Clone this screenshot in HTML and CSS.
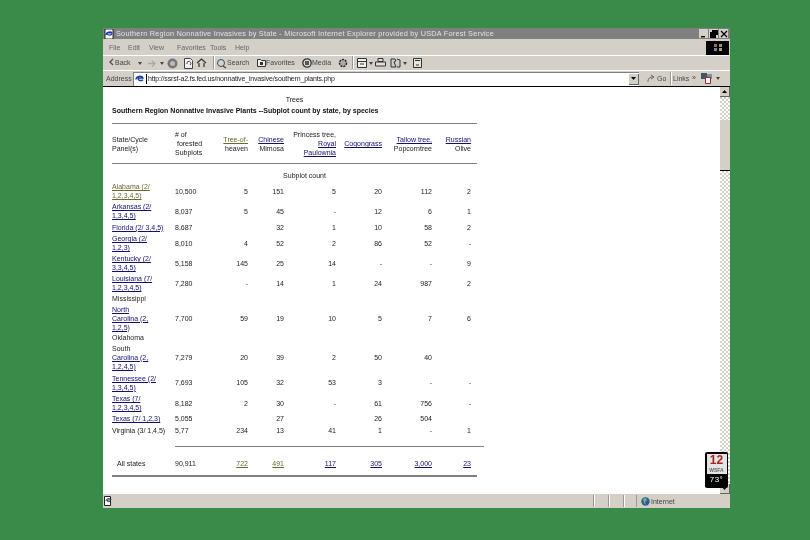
FILE: index.html
```html
<!DOCTYPE html>
<html lang="en">
<head>
<meta charset="utf-8">
<title>Southern Region Nonnative Invasives by State</title>
<link rel="stylesheet" href="styles.css">
</head>
<body>
<div class="window">
  <div class="titlebar">
    <svg class="ti" width="10" height="10" viewBox="0 0 10 10"><rect x="1" y="0" width="8" height="10" fill="#fff" stroke="#000" stroke-width=".8"/><path d="M2 6c0-3 5-4 6-2H3c0 2 3 3 5 1" fill="none" stroke="#1a3fa0" stroke-width="1.2"/></svg>
    <span class="title">Southern Region Nonnative Invasives by State - Microsoft Internet Explorer provided by USDA Forest Service</span>
    <div class="wbtns">
      <span class="wb"><svg width="8" height="8" viewBox="0 0 8 8"><rect x="1" y="6" width="4" height="1.4"/></svg></span>
      <span class="wb"><svg width="8" height="8" viewBox="0 0 8 8"><path d="M2 0h6v5H6v3H0V2h2z"/></svg></span>
      <span class="wb"><svg width="8" height="8" viewBox="0 0 8 8"><path d="M1 1l6 6M7 1L1 7" stroke="#000" stroke-width="1.3"/></svg></span>
    </div>
  </div>
  <div class="menubar">
    <span class="mi m1">File</span><span class="mi m2">Edit</span><span class="mi m3">View</span><span class="mi m4">Favorites</span><span class="mi m5">Tools</span><span class="mi m6">Help</span>
    <div class="flag"><svg width="10" height="9" viewBox="0 0 10 9"><path d="M1 1h3v3H1z" fill="#a86a5a"/><path d="M6 1h3v3H6z" fill="#8a9a70"/><path d="M1 5h3v3H1z" fill="#7a8a9a"/><path d="M6 5h3v3H6z" fill="#b0a070"/></svg></div>
  </div>
  <div class="toolbar">
    <svg class="tb-ic back" width="6" height="8" viewBox="0 0 6 8"><path d="M4 1L1 4l3 3" fill="none" stroke="#555" stroke-width="1.4"/></svg>
    <span class="tl back-l">Back</span>
    <span class="drop d1"></span>
    <svg class="tb-ic fwd" width="9" height="7" viewBox="0 0 9 7"><path d="M0 3.500h6M4 .5l3 3-3 3" fill="none" stroke="#a8a8a8" stroke-width="1.300"/></svg>
    <span class="drop d2"></span>
    <svg class="tb-ic stop" width="11" height="11" viewBox="0 0 11 11"><circle cx="5.500" cy="5.500" r="5" fill="#777"/><circle cx="5.500" cy="5.500" r="2.500" fill="#bbb"/></svg>
    <svg class="tb-ic refresh" width="9" height="11" viewBox="0 0 9 11"><path d="M.5.500h6l2 2v8H.5z" fill="#f2f2f2" stroke="#444"/><path d="M3 6a2 2 0 1 1 3 1" fill="none" stroke="#444"/></svg>
    <svg class="tb-ic home" width="11" height="10" viewBox="0 0 11 10"><path d="M1 5l4.500-4L10 5M3 5v4M8 5v4" fill="none" stroke="#333" stroke-width="1.200"/></svg>
    <span class="sep s1"></span>
    <svg class="tb-ic search" width="11" height="11" viewBox="0 0 11 11"><circle cx="5" cy="5" r="3.500" fill="#cfd6d6" stroke="#444"/><path d="M7 8l3 2" stroke="#444" stroke-width="1.400"/></svg>
    <span class="tl search-l">Search</span>
    <svg class="tb-ic fav" width="9" height="9" viewBox="0 0 9 9"><path d="M.5 1.500h3l1 1h4v6h-8z" fill="#eee" stroke="#333"/><path d="M3 4h3v3H3z" fill="#333"/></svg>
    <span class="tl fav-l">Favorites</span>
    <svg class="tb-ic media" width="10" height="10" viewBox="0 0 10 10"><circle cx="5" cy="5" r="4.200" fill="#dbdbdb" stroke="#333" stroke-width="1.300"/><path d="M3 3h4v4H3z" fill="#555"/></svg>
    <span class="tl media-l">Media</span>
    <svg class="tb-ic hist" width="10" height="10" viewBox="0 0 10 10"><circle cx="5" cy="5" r="3.500" fill="#aaa" stroke="#222" stroke-dasharray="2 1" stroke-width="1.500"/></svg>
    <span class="sep s2"></span>
    <svg class="tb-ic mail" width="10" height="10" viewBox="0 0 10 10"><path d="M.5.500h9v9h-9z" fill="#eee" stroke="#333"/><path d="M.5 3.500h9M3 6h4" stroke="#333"/></svg>
    <span class="drop d3"></span>
    <svg class="tb-ic print" width="11" height="9" viewBox="0 0 11 9"><path d="M3 .500h5v3H3zM.5 4h10v4H.5z" fill="#ddd" stroke="#333"/></svg>
    <svg class="tb-ic edit" width="11" height="10" viewBox="0 0 11 10"><path d="M1 1h4l1 2-2 1 2 5H1zM7 1l3 1v7H7" fill="#ccc" stroke="#333"/></svg>
    <span class="drop d4"></span>
    <svg class="tb-ic disc" width="9" height="10" viewBox="0 0 9 10"><path d="M.5.500h8v9h-8z" fill="#e6e6e0" stroke="#333"/><path d="M2 2.500h5M3 7h3" stroke="#333"/></svg>
  </div>
  <div class="addressbar">
    <span class="addr-l">Address</span>
    <div class="addr-input">
      <svg class="addr-ic" width="9" height="10" viewBox="0 0 9 10"><path d="M1 5.500C1 2 7 1 8 4H3c0 3 3 3 5 1.800" fill="none" stroke="#1a3fa0" stroke-width="1.400"/></svg>
      <span class="url">http://ssrsf-a2.fs.fed.us/nonnative_invasive/southern_plants.php</span>
      <span class="combo"><svg width="5" height="3" viewBox="0 0 5 3"><path d="M0 0h5L2.500 3z"/></svg></span>
    </div>
    <svg class="go-ic" width="9" height="9" viewBox="0 0 9 9"><path d="M1 8c0-4 2-5 5-5M4 1l3 2-3 2" fill="none" stroke="#666"/></svg>
    <span class="go-l">Go</span>
    <span class="sep s3"></span>
    <span class="links">Links</span>
    <span class="chev">»</span>
    <svg class="bar-ic" width="11" height="11" viewBox="0 0 11 11"><rect x="0" y="0" width="6" height="6" fill="#456"/><rect x="6" y="1" width="5" height="5" fill="#7a8fa5"/><path d="M4.500 4.500h5v6h-5z" fill="#fff" stroke="#a22"/></svg>
    <span class="drop d5"></span>
  </div>
  <div class="viewport">
    <div class="page">
      <div class="page-title">Trees</div>
      <div class="page-sub">Southern Region Nonnative Invasive Plants --Subplot count by state, by species</div>
      <table class="data">
        <colgroup><col class="c0"><col class="c1"><col class="c2"><col class="c3"><col class="c4"><col class="c5"><col class="c6"><col class="c7"></colgroup>
        <tr class="r-rule"><td colspan="8"><div class="rule"></div></td></tr>
        <tr class="r-head">
          <td>State/Cycle<br>Panel(s)</td>
          <td class="l">#&nbsp;of<br>&nbsp;forested<br>Subplots</td>
          <td><a class="ol" href="#">Tree-of-</a><br>heaven</td>
          <td><a href="#">Chinese</a><br>Mimosa</td>
          <td>Princess tree,<br><a href="#">Royal</a><br><a href="#">Paulownia</a></td>
          <td><a href="#">Cogongrass</a></td>
          <td><a href="#">Tallow tree,</a><br>Popcorntree</td>
          <td><a href="#">Russian</a><br>Olive</td>
        </tr>
        <tr class="r-rule"><td colspan="8"><div class="rule"></div></td></tr>
        <tr class="r-sub"><td colspan="8">Subplot count</td></tr>
        <tr class="h20"><td><a class="ol" href="#">Alabama (2/<br>1,2,3,4,5)</a></td><td class="l">10,500</td><td>5</td><td>151</td><td>5</td><td>20</td><td>112</td><td>2</td></tr>
        <tr class="h20"><td><a href="#">Arkansas (2/<br>1,3,4,5)</a></td><td class="l">8,037</td><td>5</td><td>45</td><td>-</td><td>12</td><td>6</td><td>1</td></tr>
        <tr class="h12"><td><a href="#">Florida (2/ 3,4,5)</a></td><td class="l">8,687</td><td></td><td>32</td><td>1</td><td>10</td><td>58</td><td>2</td></tr>
        <tr class="h20"><td><a href="#">Georgia (2/<br>1,2,3)</a></td><td class="l">8,010</td><td>4</td><td>52</td><td>2</td><td>86</td><td>52</td><td>-</td></tr>
        <tr class="h20"><td><a href="#">Kentucky (2/<br>3,3,4,5)</a></td><td class="l">5,158</td><td>145</td><td>25</td><td>14</td><td>-</td><td>-</td><td>9</td></tr>
        <tr class="h20"><td><a href="#">Louisiana (7/<br>1,2,3,4,5)</a></td><td class="l">7,280</td><td>-</td><td>14</td><td>1</td><td>24</td><td>987</td><td>2</td></tr>
        <tr class="h11"><td>Mississippi</td><td></td><td></td><td></td><td></td><td></td><td></td><td></td></tr>
        <tr class="h28"><td><a href="#">North<br>Carolina (2,<br>1,2,5)</a></td><td class="l">7,700</td><td>59</td><td>19</td><td>10</td><td>5</td><td>7</td><td>6</td></tr>
        <tr class="h10"><td>Oklahoma</td><td></td><td></td><td></td><td></td><td></td><td></td><td></td></tr>
        <tr class="h30"><td>South<br><a href="#">Carolina (2,<br>1,2,4,5)</a></td><td class="l">7,279</td><td>20</td><td>39</td><td>2</td><td>50</td><td>40</td><td></td></tr>
        <tr class="h21"><td><a href="#">Tennessee (2/<br>1,3,4,5)</a></td><td class="l">7,693</td><td>105</td><td>32</td><td>53</td><td>3</td><td>-</td><td>-</td></tr>
        <tr class="h20"><td><a href="#">Texas (7/<br>1,2,3,4,5)</a></td><td class="l">8,182</td><td>2</td><td>30</td><td>-</td><td>61</td><td>756</td><td>-</td></tr>
        <tr class="h11"><td><a href="#">Texas (7/ 1,2,3)</a></td><td class="l">5,055</td><td></td><td>27</td><td></td><td>26</td><td>504</td><td></td></tr>
        <tr class="h12"><td>Virginia (3/ 1,4,5)</td><td class="l">5,77</td><td>234</td><td>13</td><td>41</td><td>1</td><td>-</td><td>1</td></tr>
        <tr class="r-total-rule"><td></td><td colspan="7"><div class="rule rule-over"></div></td></tr>
        <tr class="r-total"><td class="all">All states</td><td class="l">90,911</td><td><a class="ol" href="#">722</a></td><td><a class="ol" href="#">491</a></td><td><a href="#">117</a></td><td><a href="#">305</a></td><td><a href="#">3,000</a></td><td><a href="#">23</a></td></tr>
        <tr class="r-rule"><td colspan="8"><div class="rule rule-thick"></div></td></tr>
      </table>
    </div>
    <div class="scrollbar">
      <span class="sb-btn"><svg width="5" height="3" viewBox="0 0 5 3"><path d="M0 3h5L2.500 0z"/></svg></span>
      <span class="sb-thumb"></span>
      <span class="sb-track"></span>
      <span class="sb-btn"><svg width="5" height="3" viewBox="0 0 5 3"><path d="M0 0h5L2.500 3z"/></svg></span>
    </div>
    <div class="badge">
      <div class="badge-logo"><span class="b12">12</span><span class="bw">WSFA</span></div>
      <div class="badge-temp">73°</div>
    </div>
  </div>
  <div class="statusbar">
    <svg class="st-ic" width="9" height="10" viewBox="0 0 9 10"><path d="M.5.500h6v9h-6z" fill="#fff" stroke="#222"/><path d="M2 5c0-3 5-3 5-1H3c0 2 2 2 4 1" fill="none" stroke="#234"/></svg>
    <span class="st-fill"></span>
    <span class="st-cell"></span><span class="st-cell"></span><span class="st-cell w13"></span>
    <div class="st-zone">
      <svg width="9" height="9" viewBox="0 0 9 9"><circle cx="4.500" cy="4.500" r="4.200" fill="#2a5c9a"/><path d="M2 2l3-1 1 2-2 2 1 3-2-2z" fill="#7fb27a"/></svg>
      <span class="zone-l">Internet</span>
    </div>
  </div>
</div>
</body>
</html>
```
FILE: styles.css
```css
html, body { margin: 0; height: 100%; }
body { background: #3a8a4a; padding: 28px 0 0 103px; box-sizing: border-box; width: 810px; height: 540px; overflow: hidden; font-family: "Liberation Sans", Arial, sans-serif; }
.window { width: 627px; height: 480px; background: #d4d0c8; display: flex; flex-direction: column; color: #333; filter: blur(.35px); }

.titlebar { height: 11px; margin-bottom: 1px; background: #808080; display: flex; align-items: center; padding: 0 1px; }
.ti { margin-right: 2px; flex: none; }
.title { color: #e2e2e2; font: 7.3px/11px "Liberation Sans", sans-serif; letter-spacing: .23px; white-space: nowrap; flex: 1; }
.wbtns { display: flex; gap: 0; margin-right: 1px; }
.wb { width: 9px; height: 9px; margin-left: 1px; background: #d4d0c8; display: flex; align-items: center; justify-content: center; }

.menubar { height: 16px; border-bottom: 1px solid #fff; display: flex; align-items: center; position: relative; box-sizing: border-box; font-size: 7px; color: #666; }
.mi { position: absolute; }
.m1 { left: 6px; } .m2 { left: 25px; } .m3 { left: 46px; } .m4 { left: 74px; } .m5 { left: 107px; } .m6 { left: 132px; }
.flag { margin-left: auto; margin-right: 1px; width: 23px; height: 14px; background: #000; display: flex; align-items: center; justify-content: center; }

.toolbar { height: 15px; position: relative; font-size: 7px; border-bottom: 1px solid #fff; box-sizing: border-box; color: #444; }
.tb-ic, .tl, .drop, .sep { position: absolute; }
.tb-ic { top: 2px; }
.tl { top: 2px; line-height: 10px; }
.drop { width: 0; height: 0; border: 2px solid transparent; border-top: 3px solid #444; border-bottom: 0; top: 6px; }
.sep { width: 1px; height: 13px; top: 0; background: #999; border-right: 1px solid #fff; }
.back { left: 6px; } .back-l { left: 12px; }
.d1 { left: 35px; }
.fwd { left: 45px; top: 4px; }
.d2 { left: 57px; }
.stop { left: 64px; }
.refresh { left: 81px; }
.home { left: 93px; }
.s1 { left: 110px; }
.search { left: 113px; } .search-l { left: 124px; }
.fav { left: 154px; } .fav-l { left: 163px; }
.media { left: 199px; } .media-l { left: 209px; }
.hist { left: 235px; }
.s2 { left: 249px; }
.mail { left: 254px; } .d3 { left: 266px; }
.print { left: 272px; }
.edit { left: 287px; } .d4 { left: 300px; }
.disc { left: 310px; }

.addressbar { height: 15px; display: flex; align-items: center; font-size: 7px; color: #444; }
.addr-l { margin-left: 3px; width: 27px; flex: none; }
.addr-input { width: 506px; height: 14px; box-sizing: border-box; background: #fff; border-top: 1px solid #808080; border-left: 1px solid #808080; display: flex; align-items: center; position: relative; flex: none; }
.addr-ic { margin: 0 2px 0 1px; }
.url { color: #222; letter-spacing: -.17px; border-left: 1px solid #000; padding-left: 1px; line-height: 10px; white-space: nowrap; }
.combo { position: absolute; right: 0; top: 1px; width: 10px; height: 11px; background: #d4d0c8; border: 1px solid #666; border-width: 0 1px 1px 0; box-sizing: border-box; display: flex; align-items: center; justify-content: center; }
.go-ic { margin-left: 8px; }
.go-l { margin-left: 1px; width: 11px; }
.sep.s3 { position: static; margin-left: 2px; flex: none; }
.links { margin-left: 1px; width: 19px; }
.chev { width: 6px; font-size: 7px; margin-top: -3px; }
.bar-ic { margin-left: 3px; }
.drop.d5 { position: static; margin-left: 4px; }

.viewport { flex: none; height: 408px; background: #fff; border-top: 1px solid #000; display: flex; position: relative; box-sizing: border-box; }
.page { flex: 1; padding: 7px 0 0 9px; font-size: 7px; line-height: 9px; color: #222; min-width: 0; }
.page-title { width: 365px; text-align: center; height: 12px; line-height: 11px; }
.page-sub { font-weight: bold; height: 17px; line-height: 9px; white-space: nowrap; color: #111; }
.data { border-collapse: collapse; table-layout: fixed; width: 365px; }
.data td { padding: 0 6px 0 0; text-align: right; vertical-align: middle; white-space: nowrap; }
.data td:first-child, .data td.l { text-align: left; padding: 0; }
a { color: #101070; text-decoration: underline; }
a.ol { color: #6a6a30; }
.c0 { width: 63px; } .c1 { width: 35px; } .c2 { width: 44px; } .c3 { width: 36px; } .c4 { width: 52px; } .c5 { width: 46px; } .c6 { width: 50px; } .c7 { width: 39px; }
.rule { height: 1px; background: #808080; }
.r-rule td { height: 1px; }
.r-head td { height: 39px; }
.data .r-sub td { height: 17px; text-align: center; padding: 6px 44px 0 64px; box-sizing: border-box; }
.h20 td { height: 20px; }
.h21 td { height: 21px; }
.h12 td { height: 12px; }
.h11 td { height: 11px; }
.h10 td { height: 10px; }
.h28 td { height: 28px; }
.h30 td { height: 30px; }
.r-total-rule td { height: 20px; }
.rule-over { margin-right: -7px; }
.data .r-total-rule td { padding: 0; }
.data .r-total td { height: 19px; padding-bottom: 4px; box-sizing: border-box; }
.data .r-total .all { padding-left: 5px; }
.data .r-rule td { padding: 0; }
.rule-thick { height: 2px; }

.scrollbar { flex: none; width: 10px; display: flex; flex-direction: column; background: conic-gradient(#d4d0c8 25%, #fff 0 50%, #d4d0c8 0 75%, #fff 0) 0 0 / 4px 4px; }
.sb-btn { flex: none; height: 10px; background: #d4d0c8; border-bottom: 1px solid #666; border-right: 1px solid #666; box-sizing: border-box; display: flex; align-items: center; justify-content: center; }
.sb-thumb { flex: none; height: 51px; background: #d4d0c8; border-bottom: 1px solid #000; box-sizing: border-box; margin-top: 23px; }
.sb-track { flex: 1; }

.badge { position: absolute; left: 602px; top: 365px; width: 23px; height: 36px; background: #000; border-radius: 2px; display: flex; flex-direction: column; align-items: center; box-sizing: border-box; padding-top: 2px; }
.badge-logo { width: 20px; height: 20px; background: #e4e4e4; display: flex; flex-direction: column; align-items: center; }
.b12 { font: bold 12px/13px "Liberation Sans", sans-serif; color: #a22; letter-spacing: 0; }
.bw { font: bold 5px/6px "Liberation Sans", sans-serif; color: #666; }
.badge-temp { color: #fff; font: 8px/12px "Liberation Sans", sans-serif; letter-spacing: .5px; }

.statusbar { height: 14px; background: #d4d0c8; display: flex; align-items: center; font-size: 7px; color: #444; flex: none; }
.st-ic { margin-left: 1px; }
.st-fill { flex: 1; }
.st-cell { width: 15px; height: 12px; border-left: 1px solid #999; box-shadow: inset 1px 0 0 #fff; box-sizing: border-box; }
.st-cell.w13 { width: 13px; }
.st-zone { width: 94px; height: 12px; border-left: 1px solid #999; display: flex; align-items: center; gap: 1px; padding-left: 4px; box-sizing: border-box; }
```
